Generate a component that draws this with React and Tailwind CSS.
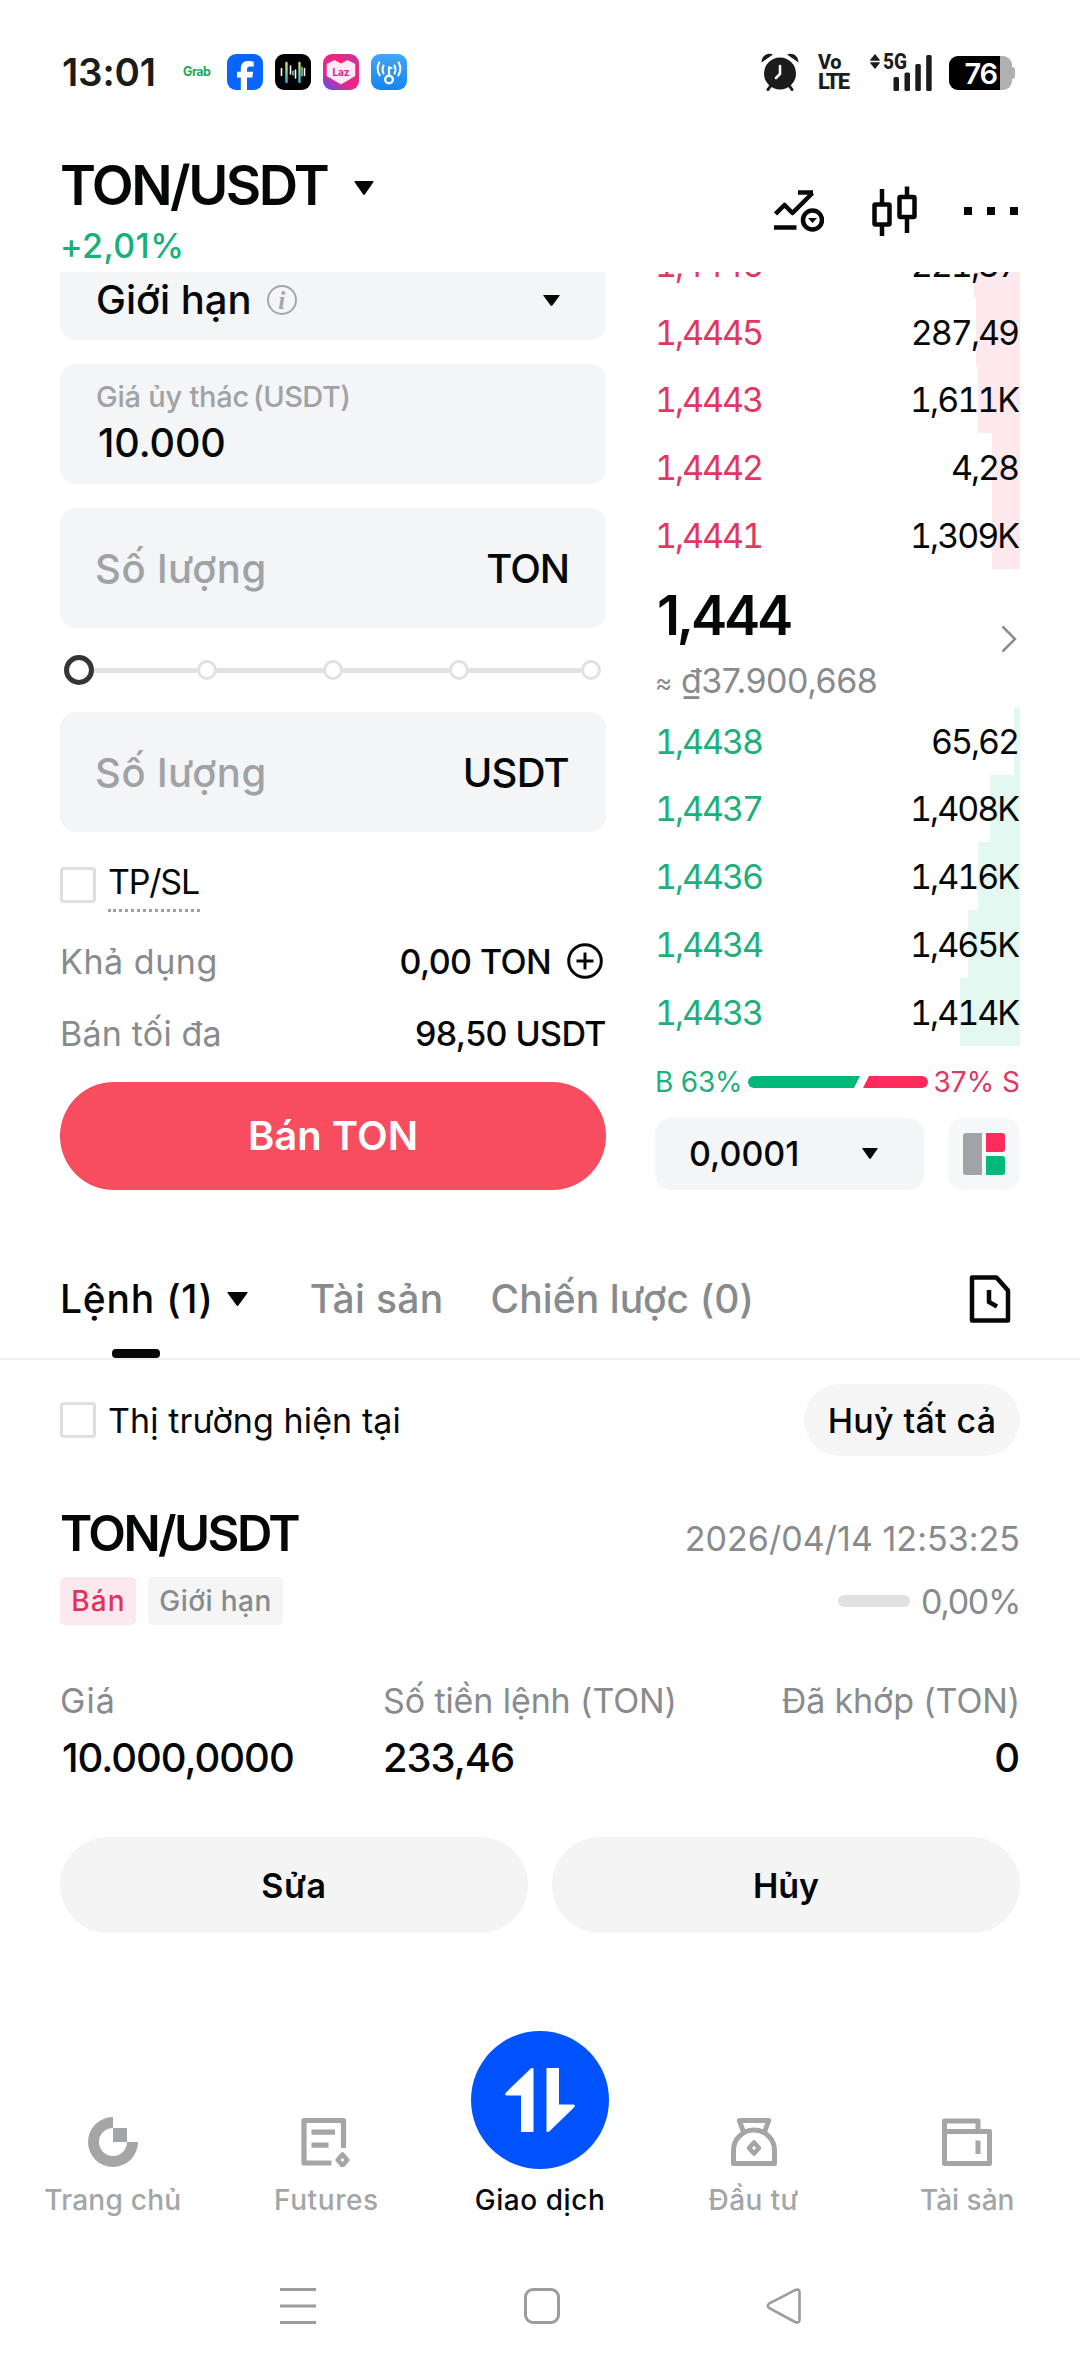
import React, { useState } from "react";

const asks = [
  { price: "1,4446", amount: "221,37", depth: 46 },
  { price: "1,4445", amount: "287,49", depth: 44 },
  { price: "1,4443", amount: "1,611K", depth: 42 },
  { price: "1,4442", amount: "4,28", depth: 28 },
  { price: "1,4441", amount: "1,309K", depth: 28 },
];

const bids = [
  { price: "1,4438", amount: "65,62", depth: 6 },
  { price: "1,4437", amount: "1,408K", depth: 30 },
  { price: "1,4436", amount: "1,416K", depth: 42 },
  { price: "1,4434", amount: "1,465K", depth: 52 },
  { price: "1,4433", amount: "1,414K", depth: 60 },
];

const Caret = ({ className }) => (
  <svg viewBox="0 0 20 14" preserveAspectRatio="none" className={className} fill="currentColor">
    <path d="M1 0h18q1 0 .5 1l-8.5 12.300q-1 1.200-2 0L.5 1Q0 0 1 0Z" />
  </svg>
);

const Checkbox = ({ className = "" }) => {
  const [checked, setChecked] = useState(false);
  return (
    <button
      onClick={() => setChecked(!checked)}
      className={`size-9 shrink-0 rounded border-3 border-[#dfdfdf] ${checked ? "bg-black" : "bg-white"} ${className}`}
    />
  );
};

const StatusBar = () => (
  <div className="flex h-[144px] items-center justify-between pl-[62px] pr-[65px]">
    <div className="flex items-center">
      <span className="w-[121px] text-[38.500px] font-semibold leading-none tracking-[-0.005em] text-[#1c1c1c]">13:01</span>
      <span className="w-[44px] text-[12.5px] font-bold leading-none tracking-[-0.04em] text-[#1fa855]">Grab</span>
      <div className="flex gap-3">
        {/* facebook */}
        <svg viewBox="0 0 36 36" className="size-9">
          <rect width="36" height="36" rx="9" fill="#0866ff" />
          <path d="M13.800 36V23.500H10v-5.800h3.800v-2.600c0-5.400 2.700-8 7.600-8 2 0 4 .3 5.300.7v5c-1-.1-2-.2-3.200-.2-2.600 0-3.500 1.100-3.500 3v2.100h6.200l-1 5.800H20V36Z" fill="#fff" />
        </svg>
        {/* sound wave */}
        <svg viewBox="0 0 36 36" className="size-9" strokeLinecap="round" strokeWidth="1.600">
          <defs>
            <linearGradient id="wave" x1="0" y1="7" x2="0" y2="29" gradientUnits="userSpaceOnUse">
              <stop offset="0" stopColor="#e8d84a" />
              <stop offset="0.5" stopColor="#7fd6a0" />
              <stop offset="1" stopColor="#3aa8f0" />
            </linearGradient>
          </defs>
          <rect width="36" height="36" rx="9" fill="#000" />
          <path d="M6.500 14.500v7M15.500 12v8M20.500 16v8M29.500 14.500v7" stroke="#fff" />
          <path d="M11.500 9.010l.01 18.900M24.500 9.010l.01 18.900" stroke="url(#wave)" strokeWidth="2.400" />
          <path d="M18 17v4M27 13v9" stroke="#cfeef5" strokeWidth="1.200" />
        </svg>
        {/* lazada */}
        <svg viewBox="0 0 36 36" className="size-9">
          <defs>
            <linearGradient id="laz" x1="0.900" y1="0" x2="0.200" y2="1">
              <stop offset="0" stopColor="#b83bb0" />
              <stop offset="0.300" stopColor="#f0257c" />
              <stop offset="0.700" stopColor="#e8268c" />
              <stop offset="1" stopColor="#6a4be0" />
            </linearGradient>
          </defs>
          <rect width="36" height="36" rx="9" fill="url(#laz)" />
          <path d="M4.500 10.500 11.500 7 18 10.500 24.500 7l7 3.500v11L18 29.500 4.500 21.500Z" fill="#fdeaf6" stroke="#fdeaf6" strokeWidth="1.500" strokeLinejoin="round" />
          <text x="18" y="21.500" textAnchor="middle" fontSize="10" fontWeight="700" fill="#d8208c">Laz</text>
        </svg>
        {/* wifi key */}
        <svg viewBox="0 0 36 36" className="size-9" fill="none" stroke="#fff" strokeWidth="2" strokeLinecap="round">
          <defs>
            <linearGradient id="key" x1="0" y1="0" x2="0" y2="1">
              <stop offset="0" stopColor="#45a5f5" />
              <stop offset="1" stopColor="#1486f0" />
            </linearGradient>
          </defs>
          <rect width="36" height="36" rx="9" fill="url(#key)" stroke="none" />
          <circle cx="18" cy="25.500" r="3.800" strokeWidth="2.400" />
          <path d="M18 21.500V13M18 14h2.500" strokeWidth="2.200" />
          <path d="M12.500 11.500q-2 4 0 8M23.500 11.500q2 4 0 8M8.300 8.500q-3.500 6.500.5 13M27.700 8.500q3.500 6.500-.5 13" />
        </svg>
      </div>
    </div>

    <div className="flex items-center text-[#1c1c1c]">
      <svg viewBox="0 0 38 38" className="size-[38px]" fill="currentColor" stroke="currentColor" strokeLinecap="round">
        <circle cx="19" cy="20.500" r="16" stroke="none" />
        <path d="M.5 9.500C.5 2.500 7 -1 12 1.500ZM37.500 9.500C37.500 2.500 31 -1 26 1.500Z" stroke="none" />
        <path d="M9.500 33l-2.500 3.500M28.500 33l2.500 3.500" strokeWidth="3" />
        <path d="M19 13v8l-4 4" fill="none" stroke="#fff" strokeWidth="2.600" />
      </svg>
      <div className="ml-[19px] w-[33px] font-[Roboto] font-extrabold">
        <div className="text-[20px] leading-[19px] tracking-[-0.02em]">Vo</div>
        <div className="text-[22px] leading-[19px] tracking-[-0.08em]">LTE</div>
      </div>
      <svg viewBox="0 0 62 37" className="ml-[19px] h-[37px] w-[62px] overflow-visible" fill="currentColor">
        <path d="M5 0l4.700 5.800v1H.3v-1ZM5 15l4.700-5.800v-1H.3v1Z" />
        <text x="13" y="15" fontSize="21.500" fontWeight="800" fontFamily="Roboto" textLength="24" lengthAdjust="spacingAndGlyphs">5G</text>
        <rect x="23.500" y="23" width="5.500" height="14" rx="1.500" />
        <rect x="34.500" y="18.500" width="5.500" height="18.500" rx="1.500" />
        <rect x="45.300" y="10" width="5.500" height="27" rx="1.500" />
        <rect x="56.200" y="1" width="5.500" height="36" rx="1.500" />
      </svg>
      <div className="ml-[17px] mt-0.5 flex items-center">
        <div className="flex h-[34px] w-[63px] items-center overflow-hidden rounded-[9px] bg-[#b0b0b0]">
          <div className="flex h-full w-[51px] items-center justify-end bg-black pr-[3px] text-[29px] font-semibold leading-none tracking-[-0.04em] text-white">
            76
          </div>
        </div>
        <div className="h-3 w-[3px] rounded-r bg-[#b0b0b0]" />
      </div>
    </div>
  </div>
);

const PairHeader = () => (
  <div className="flex h-32 justify-between pl-[60px] pr-[62px]">
    <div className="pt-3">
      <div className="flex h-[60px] items-center">
        <h1 className="w-[294px] text-[54.500px] font-semibold tracking-[-0.046em]">TON/USDT</h1>
        <Caret className="mt-1 h-[14px] w-5" />
      </div>
      <div className="mt-[10px] text-[34px] font-medium leading-10 tracking-[0.012em] text-[#15b07c]">+2,01%</div>
    </div>
    <div className="flex items-center pt-[6px]">
      <svg viewBox="0 0 50 42" className="h-[42px] w-[50px]" fill="none" stroke="#060808" strokeWidth="4.500">
        <path d="M1.500 24 10.500 15 18.500 23 38.500 3" strokeLinejoin="round" />
        <path d="M24 2.500h15" />
        <path d="M0 37.500h22.500" />
        <circle cx="38.500" cy="30" r="9.500" />
        <path d="M34 28h9l-4.500 5Z" fill="#060808" stroke="none" />
      </svg>
      <svg viewBox="0 0 46 50" className="ml-[48px] h-[50px] w-[46px]" fill="none" stroke="#060808" strokeWidth="4.500">
        <rect x="2.500" y="18.500" width="15" height="20" rx="1" />
        <path d="M10 3v14M10 39v11" />
        <rect x="27.500" y="11" width="15" height="20" rx="1" />
        <path d="M35 .500v10M35 32v15" />
      </svg>
      <div className="ml-[46px] flex gap-[15px]">
        <i className="size-2 bg-[#060808]" />
        <i className="size-2 bg-[#060808]" />
        <i className="size-2 bg-[#060808]" />
      </div>
    </div>
  </div>
);

const AmountField = ({ unit, unitClass }) => (
  <div className="flex h-[120px] items-center justify-between rounded-2xl bg-[#f4f5f7] pl-[35px] pr-[37px] pt-[2px] text-[40px] font-medium">
    <span className="tracking-[0.014em] text-[#a0a3a6]">Số lượng</span>
    <span className={unitClass}>{unit}</span>
  </div>
);

const SliderStep = ({ lineClass }) => (
  <>
    <div className={`h-[5px] bg-[#e0e2e2] ${lineClass}`} />
    <div className="size-5 shrink-0 rounded-full border-3 border-[#e0e2e2] bg-white" />
  </>
);

const OrderForm = () => (
  <div className="-mt-3 w-[546px]">
    <div className="flex h-20 items-center rounded-b-2xl bg-[#f4f5f7] pl-9 pr-[46px]">
      <span className="text-[40px] font-medium">Giới hạn</span>
      <span className="ml-[15px] flex size-[30px] items-center justify-center rounded-full border-[2.500px] border-[#a4a6a8] font-['Liberation_Serif'] text-[25px] font-bold italic leading-none text-[#a4a6a8]">
        i
      </span>
      <Caret className="ml-auto h-[11px] w-[17px]" />
    </div>

    <div className="mt-6 h-[120px] rounded-2xl bg-[#f4f5f7] pl-9 pt-[14px]">
      <div className="text-[29px] font-medium leading-[38px] text-[#a0a3a6]">
        <span className="tracking-[-0.008em]">Giá ủy thác</span>
        <span className="ml-1 tracking-[-0.018em]">(USDT)</span>
      </div>
      <div className="pl-[2px] text-[39.500px] font-medium leading-[55px] tracking-[-0.002em]">10.000</div>
    </div>

    <div className="mt-6">
      <AmountField unit="TON" unitClass="tracking-[-0.026em]" />
    </div>

    <div className="flex h-[84px] items-center pl-1">
      <div className="size-[30px] shrink-0 rounded-full border-5 border-[#333536] bg-white" />
      <SliderStep lineClass="w-[103px]" />
      <SliderStep lineClass="w-[106px]" />
      <SliderStep lineClass="w-[106px]" />
      <SliderStep lineClass="w-[112px]" />
    </div>

    <AmountField unit="USDT" unitClass="tracking-[-0.018em]" />

    <div className="mt-8 flex h-12 items-start gap-3">
      <Checkbox className="mt-[3px]" />
      <span className="h-12 w-[92px] border-b-3 border-dotted border-[#a0a0a0] text-[34px] leading-[35px] tracking-[-0.035em]">
        TP/SL
      </span>
    </div>

    <div className="mt-[29px] flex h-10 items-center text-[34px]">
      <span className="tracking-[0.016em] text-[#888b8d]">Khả dụng</span>
      <span className="ml-auto font-medium tracking-[-0.018em]">0,00 TON</span>
      <svg viewBox="0 0 36 36" className="ml-4 mr-[3px] size-9" fill="none" stroke="#060808" strokeWidth="3">
        <circle cx="18" cy="18" r="16.300" />
        <path d="M18 9.500v17M9.500 18h17" />
      </svg>
    </div>
    <div className="mt-8 flex h-10 items-center justify-between text-[34px]">
      <span className="tracking-[0.006em] text-[#888b8d]">Bán tối đa</span>
      <span className="font-medium tracking-[-0.017em]">98,50 USDT</span>
    </div>

    <button className="mt-[29px] flex h-[108px] w-full items-center justify-center rounded-full bg-[#f84c5f] text-[40px] font-semibold text-white">
      Bán TON
    </button>
  </div>
);

const BookRow = ({ row, priceClass, depthClass }) => (
  <div className="relative flex h-[67.750px] items-center justify-between pt-px text-[34px] tabular-nums tracking-[-0.060em]">
    <div className={`absolute inset-y-0 right-0 ${depthClass}`} style={{ width: row.depth }} />
    <span className={`relative ${priceClass}`}>{row.price}</span>
    <span className="relative pr-[2px]">{row.amount}</span>
  </div>
);

const OrderBook = () => (
  <div className="-mt-[42px] w-[365px]">
    {asks.map((row) => (
      <BookRow key={row.price} row={row} priceClass="text-[#e03863]" depthClass="bg-[#fde9ed]" />
    ))}

    <div className="flex h-[138px] items-start justify-between pr-[3px] pt-4">
      <div>
        <div className="pl-[2px] text-[54.500px] font-semibold leading-[60px] tracking-[-0.060em]">1,444</div>
        <div className="mt-4 flex items-center text-[34px] leading-10 text-[#888b8d]">
          <span className="w-[26px] pt-1 text-[26px] leading-9">≈</span>
          <span className="tracking-[-0.014em]">₫37.900,668</span>
        </div>
      </div>
      <svg viewBox="0 0 16 28" className="mt-10 h-7 w-4" fill="none" stroke="#8a8d8f" strokeWidth="2.500">
        <path d="M1.500 1.500 14 14 1.500 26.500" />
      </svg>
    </div>

    {bids.map((row) => (
      <BookRow key={row.price} row={row} priceClass="text-[#1db07c]" depthClass="bg-[#e3f8f1]" />
    ))}

    <div className="mt-4 flex h-10 items-center justify-between text-[28px]">
      <span className="tracking-[-0.008em] text-[#1db07c]">B 63%</span>
      <svg viewBox="0 0 180 12" className="h-3 w-[180px]">
        <path d="M6 0h106l-6 12H6A6 6 0 0 1 6 0Z" fill="#00b87a" />
        <path d="M121 0h53a6 6 0 0 1 0 12h-59Z" fill="#ff2b5c" />
      </svg>
      <span className="text-[#e03863]">37% S</span>
    </div>

    <div className="mt-4 flex justify-between">
      <button className="flex h-18 w-[269px] items-center justify-between rounded-2xl bg-[#f4f5f7] pl-[34px] pr-[46px] text-[34px] font-medium">
        0,0001
        <Caret className="h-[11px] w-4" />
      </button>
      <button className="flex size-18 items-center justify-center gap-1 rounded-2xl bg-[#f6f7f8]">
        <i className="h-[42px] w-[19px] rounded-l-[3px] bg-[#a0a3a7]" />
        <span className="flex flex-col gap-1">
          <i className="size-[19px] rounded-r-[3px] bg-[#ff2b5c]" />
          <i className="size-[19px] rounded-r-[3px] bg-[#00b87a]" />
        </span>
      </button>
    </div>
  </div>
);

const OrderTabs = () => (
  <div className="mt-[60px] h-[110px] border-b-2 border-[#f1f1f1]">
    <div className="flex h-[98px] items-center pl-[60px] pr-[69px] text-[39px] font-medium">
      <span className="tracking-[0.020em]">Lệnh (1)</span>
      <Caret className="ml-[13px] h-[14px] w-[21px]" />
      <span className="ml-[62px] tracking-[0.008em] text-[#888b8d]">Tài sản</span>
      <span className="ml-[47px] tracking-[0.003em] text-[#888b8d]">Chiến lược (0)</span>
      <svg viewBox="0 0 42 48" className="ml-auto h-12 w-[42px]" fill="none" stroke="#060808" strokeWidth="4.500" strokeLinejoin="round">
        <path d="M3 2.500h24.500L39 15.500v30H3Z" />
        <path d="M20 15v12l8 4.500" strokeLinejoin="miter" />
      </svg>
    </div>
    <div className="ml-[112px] mt-px h-[9px] w-12 rounded-[4px] bg-[#060808]" />
  </div>
);

const OpenOrder = () => (
  <div className="px-[60px]">
    <div className="mt-6 flex h-18 items-center">
      <Checkbox />
      <span className="ml-3 text-[34px] tracking-[0.003em]">Thị trường hiện tại</span>
      <button className="ml-auto h-18 w-[216px] rounded-full bg-[#f5f5f5] text-[34px] font-medium tracking-[0.010em]">
        Huỷ tất cả
      </button>
    </div>

    <div className="mt-12 flex h-[60px] items-center justify-between">
      <h2 className="text-[49px] font-semibold tracking-[-0.052em]">TON/USDT</h2>
      <span className="mt-[9px] text-[34px] tracking-[0.001em] text-[#888b8d]">2026/04/14 12:53:25</span>
    </div>
    <div className="mt-[13px] flex h-12 items-center text-[28px] font-medium">
      <span className="flex h-12 w-[76px] items-center justify-center rounded-[5px] bg-[#fde8ed] pl-px tracking-[0.040em] text-[#e0335f]">Bán</span>
      <span className="ml-3 flex h-12 w-[135px] items-center justify-center rounded-[5px] bg-[#f5f5f5] tracking-[0.015em] text-[#888b8d]">
        Giới hạn
      </span>
      <span className="ml-auto h-3 w-18 rounded-full bg-[#e0e2e2]" />
      <span className="ml-[11px] text-[34px] font-normal tracking-[-0.040em] text-[#888b8d]">0,00%</span>
    </div>

    <div className="mt-14 flex">
      <div className="w-[323px]">
        <div className="text-[34px] leading-10 tracking-[0.030em] text-[#888b8d]">Giá</div>
        <div className="mt-3 pl-[2px] text-[40px] font-medium leading-[50px] tracking-[-0.026em]">10.000,0000</div>
      </div>
      <div>
        <div className="text-[34px] leading-10 tracking-[-0.003em] text-[#888b8d]">Số tiền lệnh (TON)</div>
        <div className="mt-3 text-[40px] font-medium leading-[50px] tracking-[-0.027em]">233,46</div>
      </div>
      <div className="ml-auto text-right">
        <div className="text-[34px] leading-10 tracking-[-0.004em] text-[#888b8d]">Đã khớp (TON)</div>
        <div className="mt-3 text-[40px] font-medium leading-[50px]">0</div>
      </div>
    </div>

    <div className="mt-[54px] grid grid-cols-2 gap-6 text-[34px] font-semibold">
      <button className="h-24 rounded-full bg-[#f4f4f4] tracking-[0.020em]">Sửa</button>
      <button className="h-24 rounded-full bg-[#f4f4f4]">Hủy</button>
    </div>
  </div>
);

const NavItem = ({ label, className = "", children }) => (
  <div className="flex flex-col items-center">
    {children}
    <span className={`text-[28px] font-medium leading-9 ${className}`}>{label}</span>
  </div>
);

const BottomNav = () => (
  <div className="mt-[98px] grid h-[187px] grid-cols-5 items-end px-[6px] text-[#a3a5a7]">
    <NavItem label="Trang chủ" className="tracking-[0.009em]">
      <svg viewBox="0 0 50 50" className="mb-[15px] size-[50px]" fill="currentColor">
        <path d="M25 0v11A14 14 0 1 0 39 25h11A25 25 0 1 1 25 0Z" />
        <path d="M25 11h14v14H25Z" />
      </svg>
    </NavItem>
    <NavItem label="Futures" className="tracking-[0.021em]">
      <svg viewBox="0 0 50 50" className="mb-[15px] size-[50px]" fill="none" stroke="currentColor" strokeWidth="5.200" strokeLinejoin="round">
        <path d="M42.500 31V3.500H3V46h27.500" />
        <path d="M10.500 15.200h23.500M10.500 28.200h17" />
        <path d="M41.500 37.500 46.300 43l-4.800 5.500L36.700 43Z" strokeWidth="4.500" />
      </svg>
    </NavItem>
    <NavItem label="Giao dịch" className="tracking-[0.020em] text-[#060808]">
      <div className="mb-[13px] flex size-[138px] items-center justify-center rounded-full bg-[#0052ff]">
        <svg viewBox="0 0 70 64" className="h-16 w-[70px]" fill="#fff">
          <path d="M28.500 1v63H16V27.500H1.500Q-.5 27 .5 25L25.500.8Q28-1 28.500 1Z" />
          <path d="M41.500 63V0H54v36.500h14.500q2 .5 1 2.500L44.500 63.200q-2.500 1.800-3-.2Z" />
        </svg>
      </div>
    </NavItem>
    <NavItem label="Đầu tư" className="tracking-[0.015em]">
      <svg viewBox="0 0 50 50" className="mb-[15px] size-[50px]" fill="none" stroke="currentColor" strokeWidth="5" strokeLinejoin="round">
        <path d="M14.500 15 10.300 3.500h29.400L35.500 15" />
        <path d="M4.500 46.500V33.500a20.500 20.500 0 0 1 41 0v13Z" />
        <path d="M25 25.500 30 31l-5 5.500L20 31Z" strokeWidth="4.500" />
      </svg>
    </NavItem>
    <NavItem label="Tài sản">
      <svg viewBox="0 0 50 50" className="mb-[15px] size-[50px]" fill="none" stroke="currentColor" strokeWidth="5" strokeLinejoin="round">
        <path d="M36 14V4H2.500v10" />
        <path d="M2.500 14.500h45V46.500h-45Z" />
        <path d="M36 23.500v13.500" />
      </svg>
    </NavItem>
  </div>
);

const SystemBar = () => (
  <div className="mt-[70px] flex h-9 items-center pl-[280px]">
    <svg viewBox="0 0 36 36" className="size-9" fill="none" stroke="#9c9c9c" strokeWidth="3">
      <path d="M0 1.500h36M0 18h36M0 34.500h36" />
    </svg>
    <span className="ml-[208px] size-9 rounded-[9px] border-3 border-[#9c9c9c]" />
    <svg viewBox="0 0 36 36" className="ml-[206px] size-9" fill="none" stroke="#9c9c9c" strokeWidth="2.600" strokeLinejoin="round">
      <path d="M29 2.200 3 15.700q-2.500 2 0 4.200L29 34q4.500 1.500 4.500-2V4q0-3.500-4.500-1.800Z" />
    </svg>
  </div>
);

const App = () => {
  return (
    <div className="h-[2372px] w-[1080px] overflow-hidden bg-white font-[Inter,sans-serif] text-[#060808]">
      <StatusBar />
      <PairHeader />
      <div className="flex justify-between overflow-hidden px-[60px]">
        <OrderForm />
        <OrderBook />
      </div>
      <OrderTabs />
      <OpenOrder />
      <BottomNav />
      <SystemBar />
    </div>
  );
};

export default App;
